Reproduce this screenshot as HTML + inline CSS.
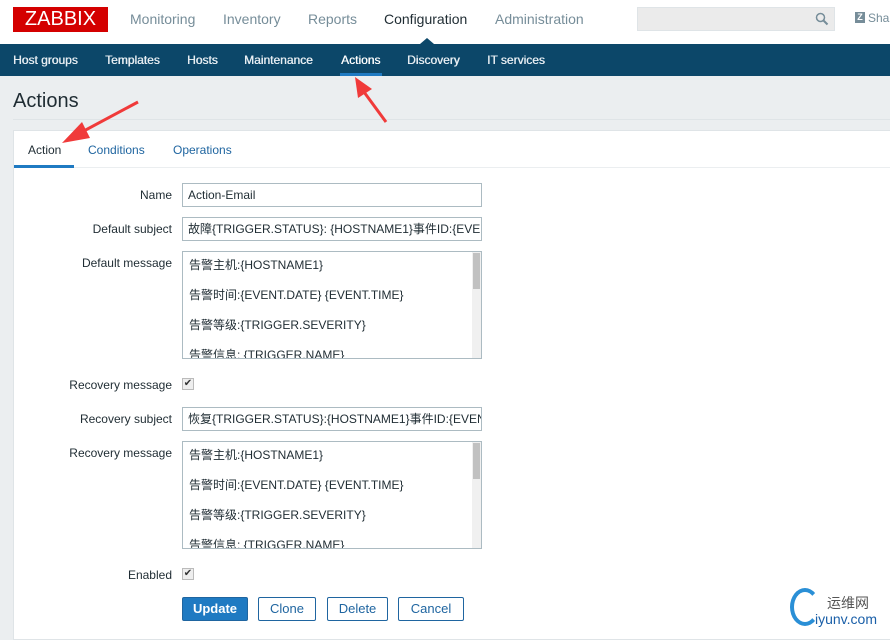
<!DOCTYPE html>
<html><head><meta charset="utf-8"><style>
*{box-sizing:border-box;margin:0;padding:0}
body{width:890px;height:634px;overflow:hidden;background:#ebeef0;font-family:"Liberation Sans","Noto Sans CJK SC",sans-serif;font-size:12px;color:#1f2c33;position:relative}
.top{position:absolute;left:0;top:0;width:890px;height:44px;background:#fff}
.logo{position:absolute;left:13px;top:7px;width:95px;height:25px;background:#d40000;color:#fff;font-size:20px;line-height:25px;text-align:center}
.mm{position:absolute;top:11px;font-size:14px;color:#768d99}
.search{position:absolute;left:637px;top:7px;width:198px;height:24px;background:#ebebeb;border:1px solid #dfe4e7}
.nav{position:absolute;left:0;top:44px;width:890px;height:32px;background:#0c4769}
.nav span{position:absolute;top:9px;color:#e6edf2;font-size:12px;text-shadow:0.4px 0 0 #e6edf2}
.title{position:absolute;left:13px;top:90px;font-size:20px;color:#1f2c33}
.hl{position:absolute;left:13px;top:119px;width:877px;height:1px;background:#dfe4e7}
.panel{position:absolute;left:13px;top:130px;width:877px;height:510px;background:#fff;border:1px solid #dfe4e7;border-right:none}
.tabs{position:absolute;left:0;top:0;width:877px;height:37px;border-bottom:1px solid #ebeef0}
.tab{position:absolute;top:12px;color:#1f65a0}
.lbl{position:absolute;right:718px;text-align:right;white-space:nowrap}
.in{position:absolute;left:182px;width:300px;height:24px;border:1px solid #acbbc2;padding:0 5px;line-height:22px;font-size:12px;white-space:nowrap;overflow:hidden}
.ta{position:absolute;left:182px;width:300px;height:108px;border:1px solid #acbbc2;overflow:hidden}
.ta .txt{padding-left:6px;line-height:30px;position:relative;top:-2px}
.sb{position:absolute;right:0;top:0;width:9px;height:106px;background:#f0f0f0}
.sb i{position:absolute;left:1px;top:1px;width:7px;height:36px;background:#c1c1c1}
.cb{position:absolute;left:182px;width:12px;height:12px;border:1px solid #bbb;background:#eee;font-size:10px;line-height:10px;text-align:center;color:#333}
.btn{position:absolute;top:597px;height:24px;border:1px solid #1f65a0;color:#1f65a0;background:#fff;text-align:center;line-height:22px;font-size:13px;border-radius:2px}
</style></head><body>
<div class="top">
<div class="logo">ZABBIX</div>
<span class="mm" style="left:130px">Monitoring</span>
<span class="mm" style="left:223px">Inventory</span>
<span class="mm" style="left:308px">Reports</span>
<span class="mm" style="left:384px;color:#1f2c33">Configuration</span>
<span class="mm" style="left:495px">Administration</span>
<div class="search"><svg style="position:absolute;right:5px;top:4px" width="14" height="14"><circle cx="5.5" cy="5.5" r="4" fill="none" stroke="#768d99" stroke-width="1.5"/><path d="M8.5 8.5L12.5 12.5" stroke="#768d99" stroke-width="2"/></svg></div>
<span style="position:absolute;left:855px;top:12px;width:10px;height:11px;background:#768d99;color:#fff;font-size:9px;font-weight:bold;text-align:center;line-height:11px">Z</span>
<span style="position:absolute;left:868px;top:11px;color:#768d99;font-size:12px">Sha</span>
<div style="position:absolute;left:420px;top:38px;width:0;height:0;border-left:7px solid transparent;border-right:7px solid transparent;border-bottom:6px solid #0c4769"></div>
</div>
<div class="nav">
<span style="left:13px">Host groups</span>
<span style="left:105px">Templates</span>
<span style="left:187px">Hosts</span>
<span style="left:244px">Maintenance</span>
<span style="left:341px;color:#fff">Actions</span>
<span style="left:407px">Discovery</span>
<span style="left:487px">IT services</span>
<div style="position:absolute;left:340px;top:29px;width:42px;height:3px;background:#1f7ac2"></div>
</div>
<div class="title">Actions</div>
<div class="hl"></div>
<div class="panel">
<div class="tabs">
<span class="tab" style="left:14px;color:#1f2c33">Action</span>
<span class="tab" style="left:74px">Conditions</span>
<span class="tab" style="left:159px">Operations</span>
<div style="position:absolute;left:0;top:34px;width:60px;height:3px;background:#1f7ac2"></div>
</div>
</div>
<div class="lbl" style="top:188px">Name</div>
<div class="in" style="top:183px">Action-Email</div>
<div class="lbl" style="top:222px">Default subject</div>
<div class="in" style="top:217px">故障{TRIGGER.STATUS}: {HOSTNAME1}事件ID:{EVENT.ID}</div>
<div class="lbl" style="top:256px">Default message</div>
<div class="ta" style="top:251px"><div class="txt">告警主机:{HOSTNAME1}<br>告警时间:{EVENT.DATE} {EVENT.TIME}<br>告警等级:{TRIGGER.SEVERITY}<br>告警信息: {TRIGGER.NAME}</div><div class="sb"><i></i></div></div>
<div class="lbl" style="top:378px">Recovery message</div>
<div class="cb" style="top:378px">✔</div>
<div class="lbl" style="top:412px">Recovery subject</div>
<div class="in" style="top:407px">恢复{TRIGGER.STATUS}:{HOSTNAME1}事件ID:{EVENT.ID}</div>
<div class="lbl" style="top:446px">Recovery message</div>
<div class="ta" style="top:441px"><div class="txt">告警主机:{HOSTNAME1}<br>告警时间:{EVENT.DATE} {EVENT.TIME}<br>告警等级:{TRIGGER.SEVERITY}<br>告警信息: {TRIGGER.NAME}</div><div class="sb"><i></i></div></div>
<div class="lbl" style="top:568px">Enabled</div>
<div class="cb" style="top:568px">✔</div>
<div class="btn" style="left:182px;width:66px;background:#1f7ac2;color:#fff;font-weight:bold">Update</div>
<div class="btn" style="left:258px;width:58px">Clone</div>
<div class="btn" style="left:327px;width:61px">Delete</div>
<div class="btn" style="left:398px;width:66px">Cancel</div>
<div style="position:absolute;left:790px;top:588px;width:30px;height:38px;border:4px solid #2a8fd6;border-right-color:transparent;border-radius:50%"></div>
<span style="position:absolute;left:827px;top:593px;font-size:14px;color:#555">运维网</span>
<span style="position:absolute;left:815px;top:611px;font-size:14px;color:#1a5fa8">iyunv.com</span>
<svg style="position:absolute;left:0;top:0" width="890" height="634">
<path d="M138 102L80 133" stroke="#f03a3a" stroke-width="3"/><path d="M62 143L82 122L90 138Z" fill="#f03a3a"/>
<path d="M386 122L364 92" stroke="#f03a3a" stroke-width="3"/><path d="M355 77L372 89L358 98Z" fill="#f03a3a"/>
</svg>
</body></html>
